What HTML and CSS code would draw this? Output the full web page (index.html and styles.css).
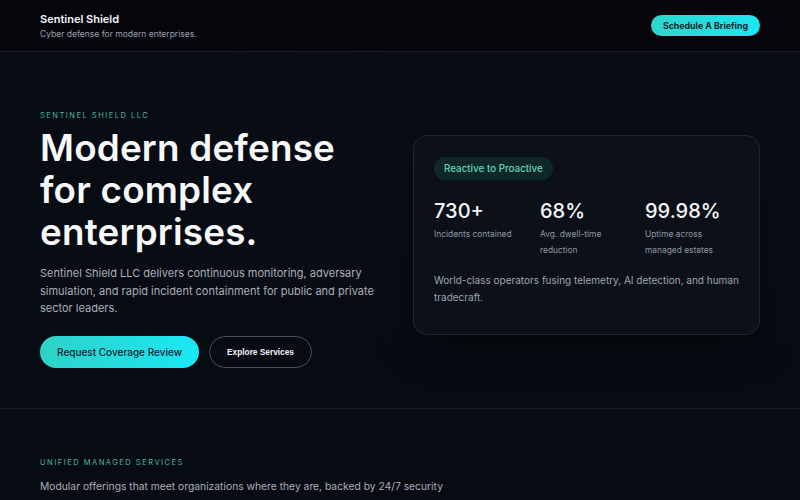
FILE: index.html
```html
<!DOCTYPE html>
<html lang="en">
<head>
<meta charset="utf-8">
<title>Sentinel Shield</title>
<link rel="stylesheet" href="styles.css">
</head>
<body>
<header class="site-header">
  <div class="brand">
    <div class="brand-name">Sentinel Shield</div>
    <div class="brand-tag">Cyber defense for modern enterprises.</div>
  </div>
  <button class="btn-cta">Schedule A Briefing</button>
</header>
<main>
  <section class="hero">
    <div class="hero-copy">
      <div class="eyebrow">SENTINEL SHIELD LLC</div>
      <h1 class="hero-title">Modern defense for complex enterprises.</h1>
      <p class="hero-text">Sentinel Shield LLC delivers continuous monitoring, adversary simulation, and rapid incident containment for public and private sector leaders.</p>
      <div class="hero-actions">
        <button class="btn-primary">Request Coverage Review</button>
        <button class="btn-ghost">Explore Services</button>
      </div>
    </div>
    <div class="stat-card">
      <span class="pill">Reactive to Proactive</span>
      <div class="stats">
        <div class="stat">
          <div class="stat-value">730+</div>
          <div class="stat-label">Incidents contained</div>
        </div>
        <div class="stat">
          <div class="stat-value">68%</div>
          <div class="stat-label">Avg. dwell-time reduction</div>
        </div>
        <div class="stat">
          <div class="stat-value">99.98%</div>
          <div class="stat-label">Uptime across managed estates</div>
        </div>
      </div>
      <p class="card-text">World-class operators fusing telemetry, AI detection, and human tradecraft.</p>
    </div>
  </section>
  <section class="services">
    <div class="eyebrow">UNIFIED MANAGED SERVICES</div>
    <p class="services-text">Modular offerings that meet organizations where they are, backed by 24/7 security operations centers and onsite response engineers.</p>
  </section>
</main>
</body>
</html>
```

FILE: styles.css
```css
* { box-sizing: border-box; }
html, body { margin: 0; padding: 0; }
body {
  background: #070b12;
  color: #f3f5f8;
  font-family: Inter, "Noto Sans", sans-serif;
  overflow: hidden;
}
.site-header {
  display: flex;
  justify-content: space-between;
  align-items: center;
  height: 52px;
  padding: 0 40px;
  background: #05060c;
  border-bottom: 1px solid #141a23;
}
.brand-name {
  font-size: 11px;
  font-weight: 600;
  line-height: 16px;
  margin-top: 0;
}
.brand-tag {
  font-size: 8.5px;
  color: #9aa1ad;
  margin-top: 1px;
  line-height: 12px;
}
.btn-cta {
  border: 0;
  border-radius: 999px;
  height: 21px;
  padding: 0 12px;
  background: linear-gradient(90deg, #2ed6cc, #1ee6f0);
  color: #0a1f2a;
  font-family: Inter, sans-serif;
  font-size: 8.8px;
  font-weight: 700;
  margin-top: -1px;
}
.hero {
  display: flex;
  justify-content: space-between;
  align-items: flex-start;
  padding: 58px 40px 40px;
  border-bottom: 1px solid #161d27;
  background: radial-gradient(ellipse at 75% 40%, #0a1018 0%, #070b12 70%);
  height: 357px;
}
.hero-copy { width: 350px; }
.eyebrow {
  font-size: 7.5px;
  letter-spacing: 1.5px;
  color: #4fb7a2;
  line-height: 12px;
}
.hero-title {
  margin: 5px 0 0;
  font-size: 36.8px;
  line-height: 42px;
  font-weight: 600;
  letter-spacing: 0.2px;
  color: #f7f8fa;
}
.hero-text {
  margin: 12px 0 0;
  font-size: 11px;
  line-height: 17.7px;
  color: #aab0bb;
}
.hero-actions {
  display: flex;
  gap: 10px;
  margin-top: 18px;
}
.btn-primary {
  border: 0;
  border-radius: 999px;
  height: 32px;
  width: 159px;
  background: linear-gradient(90deg, #2ed2c8, #1ae8f4);
  color: #0b2230;
  font-family: Inter, sans-serif;
  font-size: 10px;
  font-weight: 500;
}
.btn-ghost {
  border: 1px solid #4a515c;
  border-radius: 999px;
  height: 32px;
  width: 103px;
  background: transparent;
  color: #f1f3f6;
  font-family: "Liberation Sans", Arial, sans-serif;
  font-size: 8.3px;
  font-weight: 700;
}
.stat-card {
  width: 347px;
  margin-top: 25px;
  padding: 20px 20px 29px;
  border: 1px solid #1e2630;
  border-radius: 14px;
  background: #0c1119;
  box-shadow: 0 10px 40px rgba(0,0,0,0.45);
}
.pill {
  display: inline-block;
  height: 23px;
  line-height: 23px;
  padding: 0 10px;
  border-radius: 999px;
  background: #0f2827;
  color: #5fd4bb;
  font-size: 9.8px;
  font-weight: 500;
}
.stats {
  display: grid;
  grid-template-columns: 106px 105px 1fr;
  margin-top: 18px;
}
.stat-value {
  font-size: 20px;
  line-height: 26px;
  font-weight: 500;
  color: #f6f7f9;
}
.stat-label {
  margin-top: 3px;
  font-size: 8.4px;
  line-height: 15.5px;
  color: #8e96a2;
  padding-right: 18px;
}
.card-text {
  margin: 14px 0 0;
  font-size: 10px;
  line-height: 16.5px;
  color: #9ea5b1;
}
.services {
  padding: 48px 40px 0;
  background: #070b12;
}
.services-text {
  margin: 8px 0 0;
  width: 430px;
  font-size: 10.3px;
  line-height: 19px;
  color: #aab0bb;
}
```
